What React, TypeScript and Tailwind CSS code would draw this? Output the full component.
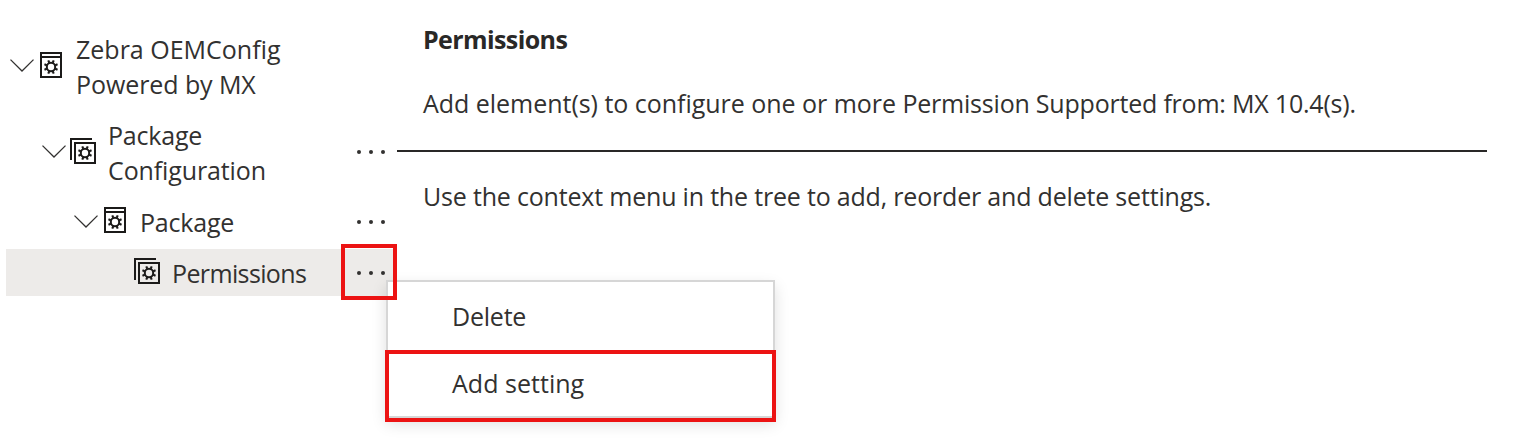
import type { ReactNode } from "react";

function Gear({ cx, cy }: { cx: number; cy: number }) {
  const angles = [22.5, 67.5, 112.5, 157.5, 202.5, 247.5, 292.5, 337.5];
  return (
    <g transform={`translate(${cx} ${cy})`} fill="none" stroke="#1b1a19">
      <circle r="4.2" strokeWidth="2" />
      {angles.map((a) => (
        <path key={a} d="M0 -4.6V-7.1" strokeWidth="2.1" transform={`rotate(${a})`} />
      ))}
    </g>
  );
}

function BundleIcon() {
  return (
    <svg width="22" height="26" viewBox="0 0 22 26" className="shrink-0">
      <path d="M1 1H21V25H1ZM1 5H21" fill="none" stroke="#1b1a19" strokeWidth="2" />
      <Gear cx={11} cy={15} />
    </svg>
  );
}

function ArrayIcon() {
  return (
    <svg width="26" height="26" viewBox="0 0 26 26" className="shrink-0">
      <path d="M1 22V1H22M5 5H25V25H5Z" fill="none" stroke="#1b1a19" strokeWidth="2" />
      <Gear cx={15} cy={15} />
    </svg>
  );
}

function Chevron() {
  return (
    <svg width="24" height="13" viewBox="0 0 24 13" className="shrink-0">
      <path d="M0.5 0.6L12 12L23.5 0.6" fill="none" stroke="#323130" strokeWidth="1.3" />
    </svg>
  );
}

function MoreButton({ className = "" }: { className?: string }) {
  return (
    <button className={`ml-auto mr-[11px] flex items-center ${className}`} aria-label="More">
      <svg width="28" height="4" viewBox="0 0 28 4" className="shrink-0">
        <circle cx="2" cy="2" r="2" fill="#323130" />
        <circle cx="14" cy="2" r="2" fill="#323130" />
        <circle cx="26" cy="2" r="2" fill="#323130" />
      </svg>
    </button>
  );
}

function Row({ className, children }: { className: string; children: ReactNode }) {
  return <div className={`flex w-[390px] shrink-0 items-center ${className}`}>{children}</div>;
}

export default function App() {
  return (
    <div className="relative flex h-[442px] w-[1526px] overflow-hidden bg-white font-['Open_Sans','Noto_Sans',sans-serif] text-[25px] leading-[35px] text-[#323130]">
      <nav className="flex w-[397px] shrink-0 flex-col gap-1 pl-[6px] pt-[26px]">
        <Row className="h-[82px] pl-1">
          <span className="mb-[3px] flex"><Chevron /></span>
          <span className="mb-1 ml-1.5 flex"><BundleIcon /></span>
          <div className="ml-[14px] flex flex-col items-start whitespace-nowrap">
            <span>Zebra OEMConfig</span>
            <span className="tracking-[-0.08px]">Powered by MX</span>
          </div>
        </Row>
        <Row className="h-[82px] pl-9">
          <span className="mb-[3px] flex"><Chevron /></span>
          <span className="mb-1 ml-1 flex"><ArrayIcon /></span>
          <div className="ml-3 flex flex-col items-start whitespace-nowrap">
            <span className="tracking-[-0.2px]">Package</span>
            <span className="tracking-[-0.12px]">Configuration</span>
          </div>
          <MoreButton className="mb-0.5" />
        </Row>
        <Row className="h-[47px] pl-[68px]">
          <Chevron />
          <span className="mb-[3px] ml-1.5 flex"><BundleIcon /></span>
          <span className="ml-[14px] pt-0.5 tracking-[-0.2px]">Package</span>
          <MoreButton />
        </Row>
        <Row className="h-[47px] bg-[#edebe9] pl-[128px]">
          <span className="mb-[3px] flex"><ArrayIcon /></span>
          <span className="ml-3 pt-0.5 tracking-[-0.63px]">Permissions</span>
          <MoreButton className="mt-px" />
        </Row>
      </nav>

      <main className="flex flex-col whitespace-nowrap">
        <h1 className="pl-[26px] pt-[22px] font-bold tracking-[-0.6px] text-[#292827]">Permissions</h1>
        <p className="pl-[26px] pt-[29px] tracking-[-0.21px]">
          <span className="tracking-[-0.03px]">Add element(s) to configure one or more </span>
          Permission Supported from: MX 10.4(s).
        </p>
        <hr className="mt-[29px] h-[2px] w-[1090px] border-0 bg-[#292827]" />
        <p className="pl-[26px] pt-[27px] tracking-[-0.19px]">Use the context menu in the tree to add, reorder and delete settings.</p>
      </main>

      <div className="absolute left-[386px] top-[280px] flex h-[138px] w-[389px] flex-col border-2 border-[#d6d6d6] bg-white shadow-[0_6px_14px_rgba(0,0,0,0.13)]">
        <div className="flex h-[67px] items-center pb-px pl-16 pt-0.5 tracking-[-0.22px]">Delete</div>
        <div className="flex h-[67px] items-center pl-16 pt-0.5 tracking-[0.03px]">Add setting</div>
      </div>
      <div className="absolute left-[341px] top-[244px] h-[56px] w-[56px] border-4 border-[#ec1313]" />
      <div className="absolute left-[385px] top-[350px] h-[72px] w-[391px] border-4 border-[#ec1313]" />
    </div>
  );
}
